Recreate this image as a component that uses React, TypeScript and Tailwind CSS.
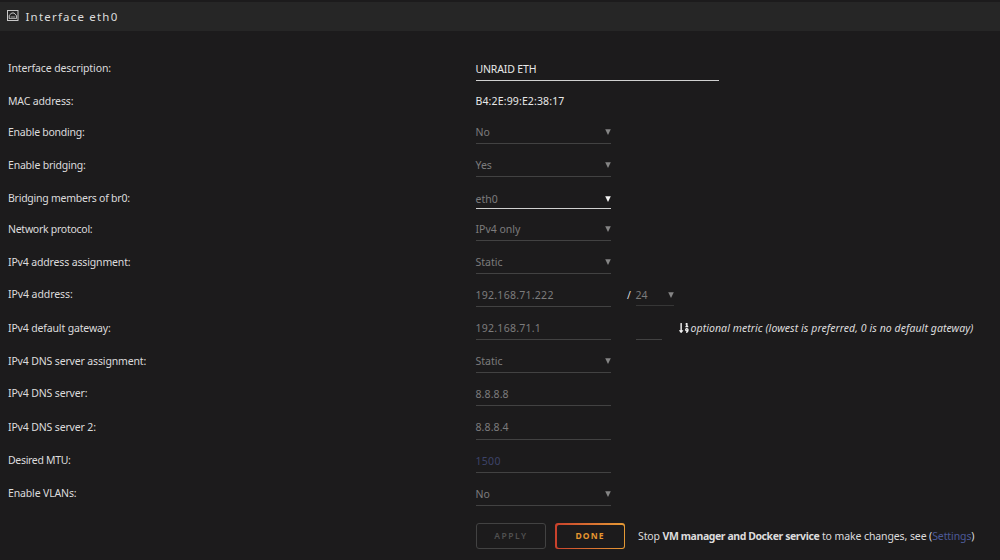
import React from 'react';
import { clsx } from 'clsx';
import { FaSortNumericDown } from 'react-icons/fa';

type Row = {
    label: string;
    value: string;
    kind: 'text' | 'select' | 'plain';
    height: string;
    field?: string;
    labelText?: string;
    valueText?: string;
    active?: boolean;
};

const rows: Row[] = [
    { label: 'Interface description:', value: 'UNRAID ETH', kind: 'text', height: 'h-[33px]', field: 'w-[243.5px] h-[23px] pt-px', labelText: 'tracking-[-0.11px]', valueText: 'text-[#e8e8e8] tracking-[-0.15px]', active: true },
    { label: 'MAC address:', value: 'B4:2E:99:E2:38:17', kind: 'plain', height: 'h-[31px]', valueText: 'text-[#e8e8e8] tracking-[0.14px]' },
    { label: 'Enable bonding:', value: 'No', kind: 'select', height: 'h-[33px]', labelText: 'tracking-[-0.25px]' },
    { label: 'Enable bridging:', value: 'Yes', kind: 'select', height: 'h-[33px]', labelText: 'tracking-[-0.2px]' },
    { label: 'Bridging members of br0:', value: 'eth0', kind: 'select', height: 'h-[31px]', field: 'w-[135px] h-[21px] pt-px', labelText: 'tracking-[-0.24px]', active: true },
    { label: 'Network protocol:', value: 'IPv4 only', kind: 'select', height: 'h-[33px]', labelText: 'tracking-[-0.27px]' },
    { label: 'IPv4 address assignment:', value: 'Static', kind: 'select', height: 'h-[32px]' },
    { label: 'IPv4 address:', value: '192.168.71.222', kind: 'text', height: 'h-[34px]', field: 'w-[135px] h-[23px] pt-px', labelText: 'tracking-[-0.08px]', valueText: 'text-[#7c7c7c] tracking-[0.26px]' },
    { label: 'IPv4 default gateway:', value: '192.168.71.1', kind: 'text', height: 'h-[33px]', valueText: 'text-[#7c7c7c] tracking-[0.26px]' },
    { label: 'IPv4 DNS server assignment:', value: 'Static', kind: 'select', height: 'h-[32px]' },
    { label: 'IPv4 DNS server:', value: '8.8.8.8', kind: 'text', height: 'h-[34px]', field: 'w-[135px] h-[23px] pt-px' },
    { label: 'IPv4 DNS server 2:', value: '8.8.8.4', kind: 'text', height: 'h-[33px]', field: 'w-[135px] h-[23px]' },
    { label: 'Desired MTU:', value: '1500', kind: 'text', height: 'h-[33px]', field: 'w-[135px] h-[23px] pt-px', labelText: 'tracking-[-0.32px]', valueText: 'text-[#3c4369] tracking-[0.3px]' },
    { label: 'Enable VLANs:', value: 'No', kind: 'select', height: 'h-[40px]', field: 'w-[135px] h-[23px] pt-px' },
];

const EthernetIcon = () => (
    <svg width="12" height="12" viewBox="0 0 12 12" fill="none" stroke="#c8c8c8" className="shrink-0">
        <rect x="0.5" y="0.5" width="10.5" height="10" strokeWidth="1" />
        <path d="M2.2 8.6V5.4L3.6 4.2L4.6 3H7L8 4.2L9.4 5.4V8.6" strokeWidth="1" />
        <path d="M2 8.5H9.6M3.6 7H8" strokeWidth="0.8" />
    </svg>
);

const Arrow = ({ active }: { active?: boolean }) => (
    <svg width="6" height="6" viewBox="0 0 6 6" className="mt-[7px] shrink-0">
        <path d="M0.2 0.3H5.8L3 6Z" fill={active ? '#f2f2f2' : '#858585'} />
    </svg>
);

const Field = ({ row }: { row: Row }) => (
    <div
        className={clsx(
            'flex justify-between shrink-0',
            row.field ?? 'w-[135px] h-[22px]',
            row.kind !== 'plain' && 'border-b',
            row.active ? 'border-[#d0d0d0]' : 'border-[#424242]',
            row.valueText ?? (row.kind === 'text' ? 'text-[#7c7c7c] tracking-[0.1px]' : 'text-[#7c7c7c]'),
        )}
    >
        <span>{row.value}</span>
        {row.kind === 'select' && <Arrow active={row.active} />}
    </div>
);

const App = () => (
    <div className="w-[1000px] h-[560px] overflow-hidden bg-[#1c1b1c] pt-[2px] font-['Noto_Sans',sans-serif] text-[10.5px] leading-5 text-[#dcdcdc] whitespace-nowrap">
        <header className="flex items-center h-[29px] pl-[6.5px] pb-px gap-[7px] bg-[#262626]">
            <EthernetIcon />
            <h1 className="pt-px text-[11.5px] tracking-[1.2px]">Interface eth0</h1>
        </header>

        <main className="pt-[27px] pl-2">
            {rows.map((row) => (
                <div key={row.label} className={clsx('flex items-start', row.height)}>
                    <label className={clsx('w-[467.5px] shrink-0', row.labelText ?? 'tracking-[-0.15px]')}>{row.label}</label>
                    <Field row={row} />
                    {row.label === 'IPv4 address:' && (
                        <div className="flex pl-[16.5px] pt-px">
                            <span className="w-[8.5px]">/</span>
                            <div className="flex justify-between w-[38px] h-[21px] border-b border-[#363636] text-[#7c7c7c]">
                                <span>24</span>
                                <Arrow />
                            </div>
                        </div>
                    )}
                    {row.label === 'IPv4 default gateway:' && (
                        <div className="flex pl-[25px]">
                            <div className="w-[26px] h-[22px] border-b border-[#424242]" />
                            <div className="flex items-center h-5 pl-[17px] gap-[2px]">
                                <FaSortNumericDown className="w-[10px] h-[12px] text-[#f2f2f2]" />
                                <em className="tracking-[0.07px]">optional metric (lowest is preferred, 0 is no default gateway)</em>
                            </div>
                        </div>
                    )}
                </div>
            ))}

            {/* Actions */}
            <div className="flex items-center pl-[467.5px] h-[26px]">
                <button className="w-[70px] h-[26px] rounded-[3px] border border-[#424242] pl-px text-[8.5px] font-semibold tracking-[1.6px] text-[#505050]">
                    APPLY
                </button>
                <div className="ml-[9.5px] w-[70px] h-[26px] rounded-[3px] p-[1.5px] bg-linear-to-r from-[#c9402c] to-[#e59a35]">
                    <button className="block w-full h-full rounded-[2px] bg-[#1c1b1c] text-[8.5px] font-bold tracking-[1.1px] text-[#e5962f]">
                        DONE
                    </button>
                </div>
                <p className="pl-[13px] tracking-[-0.1px]">
                    Stop <b className="font-bold tracking-[-0.42px]">VM manager and Docker service</b> to make changes, see (<a className="text-[#4c5a98]">Settings</a>)
                </p>
            </div>
        </main>
    </div>
);

export default App;
